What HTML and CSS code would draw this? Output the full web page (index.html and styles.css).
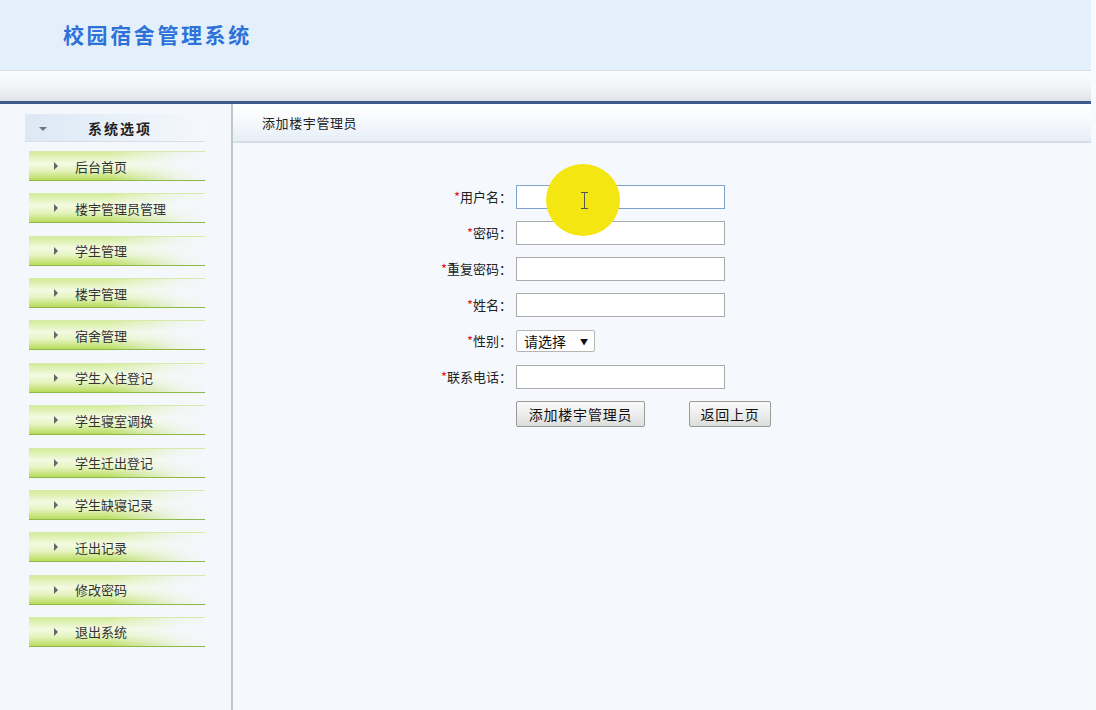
FILE: index.html
```html
<!DOCTYPE html>
<html lang="zh-CN">
<head>
<meta charset="utf-8">
<title>校园宿舍管理系统</title>
<link rel="stylesheet" href="styles.css">
</head>
<body>
<div class="page">
  <header class="header">
    <h1 class="title">校园宿舍管理系统</h1>
  </header>
  <div class="toolbar"></div>
  <div class="main">
    <aside class="sidebar">
      <div class="side-head"><span class="caret-down"></span><span class="side-head-text">系统选项</span></div>
      <ul class="menu">
        <li class="menu-item"><span class="arrow"></span>后台首页</li>
        <li class="menu-item"><span class="arrow"></span>楼宇管理员管理</li>
        <li class="menu-item"><span class="arrow"></span>学生管理</li>
        <li class="menu-item"><span class="arrow"></span>楼宇管理</li>
        <li class="menu-item"><span class="arrow"></span>宿舍管理</li>
        <li class="menu-item"><span class="arrow"></span>学生入住登记</li>
        <li class="menu-item"><span class="arrow"></span>学生寝室调换</li>
        <li class="menu-item"><span class="arrow"></span>学生迁出登记</li>
        <li class="menu-item"><span class="arrow"></span>学生缺寝记录</li>
        <li class="menu-item"><span class="arrow"></span>迁出记录</li>
        <li class="menu-item"><span class="arrow"></span>修改密码</li>
        <li class="menu-item"><span class="arrow"></span>退出系统</li>
      </ul>
    </aside>
    <section class="content">
      <div class="content-head">添加楼宇管理员</div>
      <form class="form">
        <label class="label"><span class="req">*</span>用户名：</label>
        <div class="field"><input class="input focused" type="text"></div>
        <label class="label"><span class="req">*</span>密码：</label>
        <div class="field"><input class="input" type="password"></div>
        <label class="label"><span class="req">*</span>重复密码：</label>
        <div class="field"><input class="input" type="password"></div>
        <label class="label"><span class="req">*</span>姓名：</label>
        <div class="field"><input class="input" type="text"></div>
        <label class="label"><span class="req">*</span>性别：</label>
        <div class="field"><div class="select">请选择<span class="sel-arrow">▼</span></div></div>
        <label class="label"><span class="req">*</span>联系电话：</label>
        <div class="field"><input class="input" type="text"></div>
        <div></div>
        <div class="buttons">
          <button type="button" class="btn btn-add">添加楼宇管理员</button>
          <button type="button" class="btn btn-back">返回上页</button>
        </div>
      </form>
    </section>
  </div>
  <div class="cursor-spot"><span class="ibeam"></span></div>
</div>
</body>
</html>
```

FILE: styles.css
```css
html, body {
  margin: 0;
  padding: 0;
  background: #f7f9fc;
  font-family: "Noto Sans CJK SC", "Noto Sans", sans-serif;
  color: #333;
}

.page {
  width: 1091px;
  height: 710px;
  position: relative;
  overflow: hidden;
  background: #f4f7fc;
}

.header {
  height: 70px;
  background: #e3f0fc;
  border-bottom: 1px solid #d7dee5;
  display: flex;
  align-items: center;
}

.title {
  margin: 0 0 0 63px;
  font-size: 21px;
  font-weight: bold;
  letter-spacing: 2.6px;
  color: #2e72d8;
  line-height: 1;
  padding-bottom: 2px;
}

.toolbar {
  height: 30px;
  background: linear-gradient(to bottom, #fbfcfd 0%, #f2f4f6 50%, #e0e4e8 100%);
  border-bottom: 3px solid #3d5b88;
}

.main {
  display: flex;
  height: 606px;
}

.sidebar {
  width: 231px;
  border-right: 2px solid #c2c6cd;
  background: #f4f7fc;
  padding-top: 10px;
  box-sizing: content-box;
}

.side-head {
  margin-left: 25px;
  width: 180px;
  height: 27px;
  display: flex;
  align-items: center;
  background: linear-gradient(to right, #dce8f5 0%, #e8f0f9 50%, #f5f8fc 100%);
  border-bottom: 1px solid #d9dfe6;
}

.caret-down {
  width: 0;
  height: 0;
  border-left: 4px solid transparent;
  border-right: 4px solid transparent;
  border-top: 4px solid #777;
  margin-left: 14px;
  margin-top: 3px;
}

.side-head-text {
  margin-left: 41px;
  font-size: 14px;
  font-weight: bold;
  color: #222;
  letter-spacing: 2px;
}

.menu {
  list-style: none;
  margin: 9px 0 0 0;
  padding: 0;
}

.menu-item {
  margin-left: 29px;
  width: 176px;
  height: 28px;
  margin-bottom: 12.36px;
  display: flex;
  align-items: center;
  font-size: 13px;
  color: #333;
  border-top: 1px solid #d6eaa9;
  border-bottom: 1px solid #8fb84a;
  background:
    linear-gradient(to right, rgba(244,247,252,0) 0%, rgba(244,247,252,0) 45%, rgba(244,247,252,0.85) 85%, rgba(244,247,252,1) 100%),
    linear-gradient(to bottom, #d4ec9a 0%, #f3fae2 40%, #e6f4c2 65%, #b8dc5c 100%);
}

.arrow {
  width: 0;
  height: 0;
  border-top: 4px solid transparent;
  border-bottom: 4px solid transparent;
  border-left: 4px solid #666;
  margin-left: 25px;
  margin-right: 17px;
}

.content {
  flex: 1;
  background: #f5f8fc;
}

.content-head {
  height: 37px;
  display: flex;
  align-items: center;
  padding-left: 29px;
  font-size: 13px;
  color: #222;
  background: linear-gradient(to bottom, #ffffff 0%, #f6f9fc 45%, #e6eef7 100%);
  border-bottom: 2px solid #d7dde4;
  letter-spacing: 0.6px;
}

.form {
  display: grid;
  grid-template-columns: 120px 260px;
  column-gap: 4px;
  row-gap: 12px;
  margin: 42px 0 0 159px;
  align-items: center;
}

.label {
  text-align: right;
  font-size: 13px;
  color: #222;
  line-height: 24px;
}

.req {
  color: #e1141b;
}

.field {
  height: 24px;
  display: flex;
  align-items: center;
}

.input {
  width: 209px;
  height: 24px;
  box-sizing: border-box;
  border: 1px solid #ababab;
  background: #fff;
  margin: 0;
  padding: 0;
}

.input.focused {
  border-color: #7da2ce;
}

.select {
  width: 79px;
  height: 22px;
  box-sizing: border-box;
  border: 1px solid #b5b5b5;
  background: #fff;
  font-size: 14px;
  color: #111;
  display: flex;
  align-items: center;
  padding-left: 7px;
  border-radius: 2px;
}

.sel-arrow {
  font-size: 8px;
  margin-left: 14px;
  color: #111;
}

.buttons {
  display: flex;
  gap: 44px;
  height: 26px;
}

.btn {
  height: 26px;
  box-sizing: border-box;
  border: 1px solid #9a9a9a;
  border-radius: 2px;
  background: linear-gradient(to bottom, #fafafa 0%, #ececec 55%, #dcdcdc 100%);
  font-family: "Noto Sans CJK SC", "Noto Sans", sans-serif;
  font-size: 14px;
  color: #111;
  padding: 0;
  letter-spacing: 0.8px;
}

.btn-add {
  width: 129px;
}

.btn-back {
  width: 82px;
}

.cursor-spot {
  position: absolute;
  left: 546px;
  top: 164px;
  width: 74px;
  height: 72px;
  border-radius: 50%;
  background: #f4e610;
}

.ibeam {
  position: absolute;
  left: 38px;
  top: 28px;
  width: 1px;
  height: 17px;
  background: #555;
}

.ibeam::before,
.ibeam::after {
  content: "";
  position: absolute;
  left: -3px;
  width: 7px;
  height: 1px;
  background: #555;
}

.ibeam::before { top: 0; }
.ibeam::after { bottom: 0; }
```
